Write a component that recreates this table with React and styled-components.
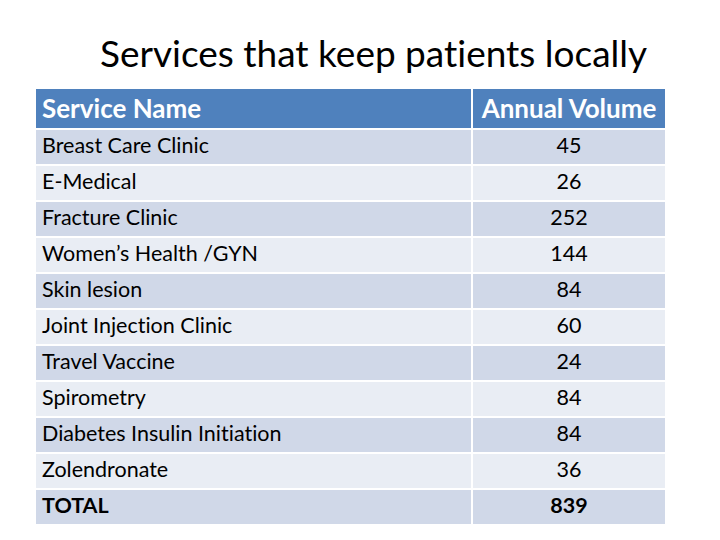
import React from 'react'
import styled, { createGlobalStyle } from 'styled-components'

const GlobalStyle = createGlobalStyle`
    html, body {
        margin: 0;
        padding: 0;
        background: #ffffff;
    }
    body {
        font-family: Lato, "Noto Sans", "Liberation Sans", sans-serif;
        font-variant-ligatures: none;
        color: #000000;
    }
`

const services = [
    { name: 'Breast Care Clinic', volume: 45 },
    { name: 'E-Medical', volume: 26 },
    { name: 'Fracture Clinic', volume: 252 },
    { name: 'Women’s Health /GYN', volume: 144 },
    { name: 'Skin lesion', volume: 84 },
    { name: 'Joint Injection Clinic', volume: 60 },
    { name: 'Travel Vaccine', volume: 24 },
    { name: 'Spirometry', volume: 84 },
    { name: 'Diabetes Insulin Initiation', volume: 84 },
    { name: 'Zolendronate', volume: 36 },
]

const App = () => {
    const total = services.reduce((sum, s) => sum + s.volume, 0)

    return (
        <Slide>
            <GlobalStyle />
            <Title>Services that keep patients locally</Title>

            <Table>
                <HeadCell>Service Name</HeadCell>
                <HeadCell $center>Annual Volume</HeadCell>

                {services.map((s, i) => (
                    <React.Fragment key={s.name}>
                        <Cell $odd={i % 2 === 0}>{s.name}</Cell>
                        <Cell $odd={i % 2 === 0} $center>{s.volume}</Cell>
                    </React.Fragment>
                ))}

                <Cell $odd $bold>TOTAL</Cell>
                <Cell $odd $bold $center>{total}</Cell>
            </Table>
        </Slide>
    )
}

export default App

const Slide = styled.div`
    width: 720px;
    height: 540px;
    box-sizing: border-box;
    padding: 30px 0 0 36px;
    overflow: hidden;
`

const Title = styled.h1`
    margin: 0 0 13px 64px;
    font-size: 37px;
    line-height: 46px;
    font-weight: 400;
    color: #000000;
`

const Table = styled.div`
    display: grid;
    width: 629px;
    grid-template-columns: 435px 192px;
    grid-template-rows: 39px;
    grid-auto-rows: 34px;
    column-gap: 2px;
    row-gap: 2px;
`

const HeadCell = styled.div`
    display: flex;
    align-items: center;
    justify-content: ${p => (p.$center ? 'center' : 'flex-start')};
    padding: 0 6px 2px;
    background: #4f81bd;
    color: #ffffff;
    font-size: 26px;
    font-weight: 700;
    white-space: nowrap;
`

const Cell = styled.div`
    display: flex;
    align-items: center;
    justify-content: ${p => (p.$center ? 'center' : 'flex-start')};
    padding: 0 6px 4px;
    background: ${p => (p.$odd ? '#d0d8e8' : '#e9edf4')};
    font-size: 21.5px;
    font-weight: ${p => (p.$bold ? 700 : 400)};
    white-space: nowrap;
`
